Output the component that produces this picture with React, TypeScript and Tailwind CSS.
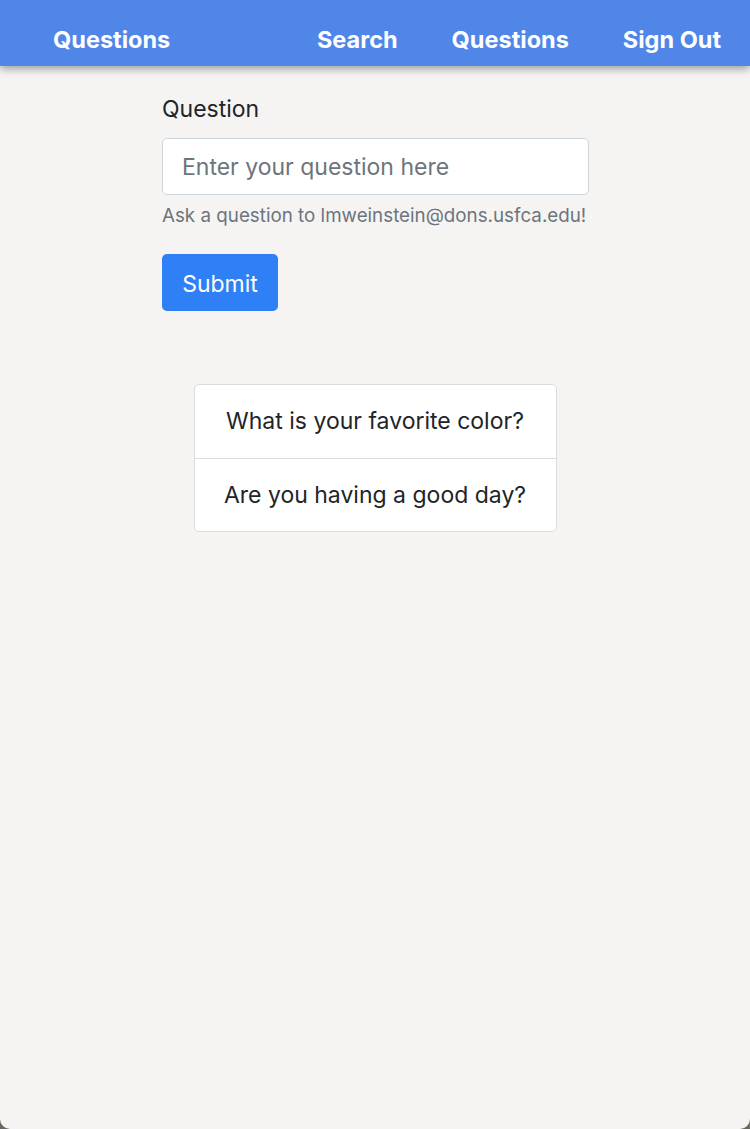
import React from 'react';

export default function App() {
  const questions = ['What is your favorite color?', 'Are you having a good day?'];

  return (
    <div className="bg-[#6b6760]" style={{ fontFamily: 'Inter, "Noto Sans", sans-serif' }}>
      <div className="h-[1129px] bg-[#f5f4f2] rounded-b-[10px] overflow-hidden">
        <nav className="h-[66px] bg-[#4f86e8] shadow-[0_3px_8px_rgba(0,0,0,0.35)] flex items-center pt-[14px] text-white font-bold text-[23.5px] relative z-10">
          <a className="ml-[53px]">Questions</a>
          <div className="ml-auto flex items-center gap-[54px] mr-[29px]">
            <a>Search</a>
            <a>Questions</a>
            <a>Sign Out</a>
          </div>
        </nav>

        <main className="flex flex-col items-center">
          <form className="w-[427px] mt-[28px] ml-[1px]">
            <label className="block text-[23px] text-[#212529] leading-[30px]">Question</label>
            <input
              className="mt-[14px] w-full h-[57px] rounded-[5px] border border-[#ced4da] bg-white px-[19px] text-[23px] text-[#495057] placeholder:text-[#6c757d] outline-none"
              placeholder="Enter your question here"
            />
            <p className="mt-[9px] text-[18.8px] text-[#6c757d] leading-[24px] whitespace-nowrap">
              Ask a question to lmweinstein@dons.usfca.edu!
            </p>
            <button
              type="button"
              className="mt-[26px] w-[116px] h-[57px] rounded-[5px] bg-[#2f7ff6] text-white text-[23px] pt-[3px]"
            >
              Submit
            </button>
          </form>

          <ul className="mt-[73px] w-[363px] bg-white border border-[#dcdcdc] rounded-[5px]">
            {questions.map((q, i) => (
              <li
                key={q}
                className={`h-[73px] flex items-center justify-center text-[23px] text-[#212529] ${i > 0 ? 'border-t border-[#dcdcdc]' : ''}`}
              >
                {q}
              </li>
            ))}
          </ul>
        </main>
      </div>
    </div>
  );
}
